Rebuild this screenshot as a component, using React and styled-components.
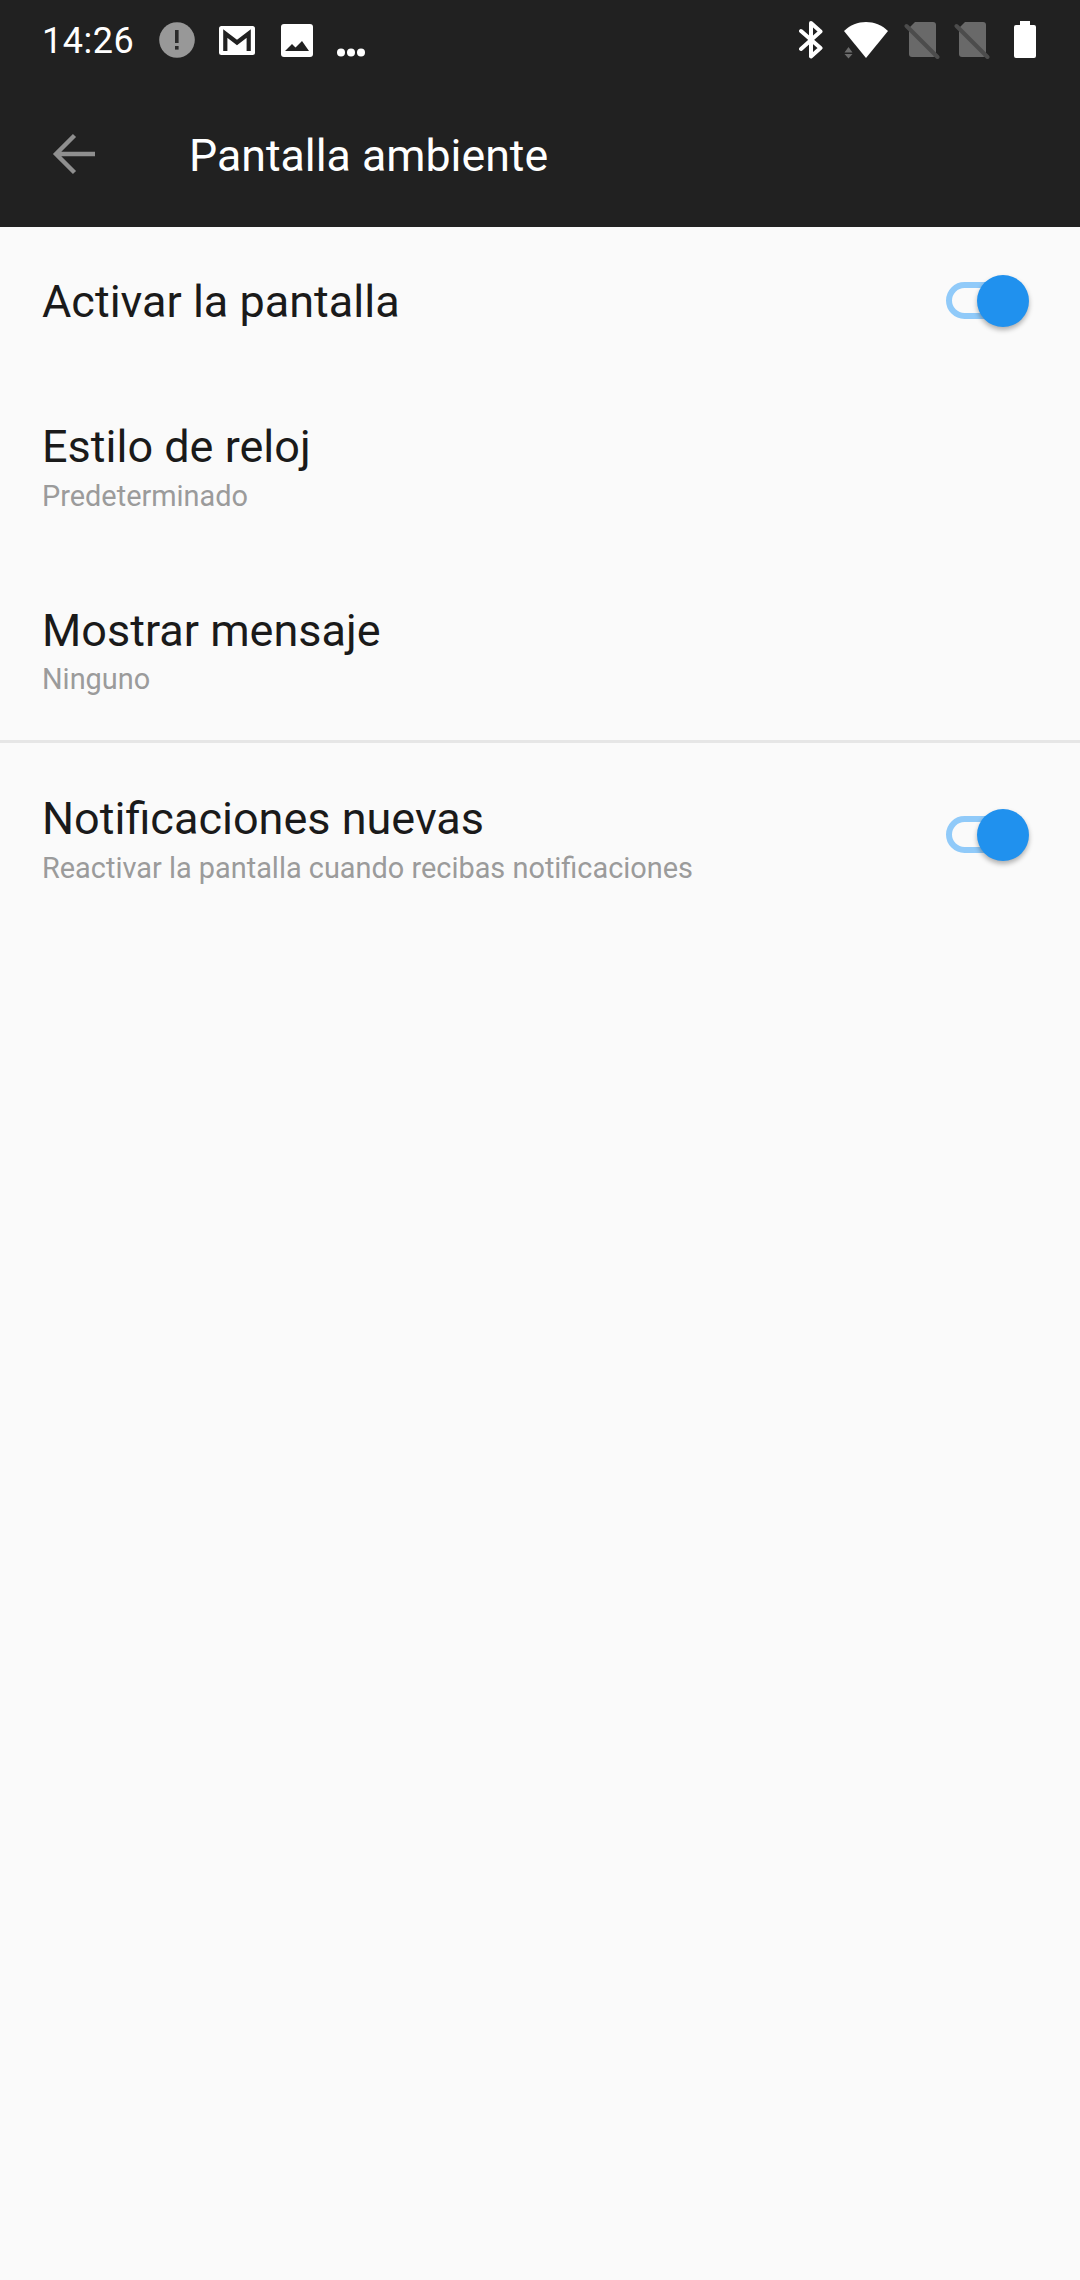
import React from "react";
import styled, { createGlobalStyle } from "styled-components";

const Global = createGlobalStyle`
  html, body { margin: 0; padding: 0; background: #fafafa; }
  body { font-family: Roboto, "Noto Sans", sans-serif; }
`;

const Page = styled.div`
  width: 1080px;
  height: 2280px;
  background: #fafafa;
  overflow: hidden;
`;

const Top = styled.header`
  background: #212121;
  height: 227px;
  display: flex;
  flex-direction: column;
`;

const StatusBar = styled.div`
  height: 80px;
  padding: 0 44px 0 42px;
  display: flex;
  align-items: center;
  justify-content: space-between;
`;

const StatusGroup = styled.div`
  display: flex;
  align-items: center;
`;

const Time = styled.span`
  color: #fff;
  font-size: 36px;
  letter-spacing: 0.5px;
  width: 117px;
  line-height: 80px;
  padding-top: 2px;
`;

const Slot = styled.svg`
  display: block;
  flex: none;
  margin-left: ${(p) => p.$ml || 0}px;
`;

const AppBar = styled.div`
  flex: 1;
  display: flex;
  align-items: center;
  padding-left: 52px;
`;

const BackIcon = styled.svg`
  display: block;
  flex: none;
`;

const Title = styled.h1`
  margin: 4px 0 0 93px;
  color: #fff;
  font-size: 44.7px;
  font-weight: 400;
  line-height: 52px;
`;

const Row = styled.div`
  display: flex;
  align-items: center;
  justify-content: space-between;
  padding: 0 73px 0 42px;
  height: ${(p) => p.$h}px;
  box-sizing: border-box;
`;

const Text = styled.div`
  display: flex;
  flex-direction: column;
  margin-top: ${(p) => p.$shift || 0}px;
`;

const RowTitle = styled.div`
  font-size: 45px;
  line-height: 52px;
  color: #1a1a1a;
`;

const RowSub = styled.div`
  font-size: 28.9px;
  line-height: 36px;
  margin-top: ${(p) => p.$gap ?? 6}px;
  color: #9b9b9b;
`;

const Divider = styled.div`
  height: 3px;
  background: #e6e6e6;
`;

const Track = styled.div`
  position: relative;
  width: 61px;
  height: 37px;
  border: 6px solid #90caf9;
  border-radius: 19px;
  box-sizing: border-box;
`;

const Knob = styled.div`
  position: absolute;
  right: -28px;
  top: -13.5px;
  width: 52px;
  height: 52px;
  border-radius: 50%;
  background: #2091ee;
  box-shadow: 0 3px 5px rgba(0, 0, 0, 0.3);
`;

function Toggle() {
  return (
    <Track>
      <Knob />
    </Track>
  );
}

function SimOff({ ml }) {
  return (
    <Slot $ml={ml} width="36" height="38" viewBox="0 0 36 38">
      <path d="M11 1H29a3 3 0 0 1 3 3V33a3 3 0 0 1-3 3H8a3 3 0 0 1-3-3V7Z" fill="#696969" />
      <path d="M2.5 5L33.5 36" stroke="#4c4c4c" strokeWidth="4" strokeLinecap="round" />
    </Slot>
  );
}

export default function App() {
  return (
    <Page>
      <Global />
      <Top>
        <StatusBar>
          <StatusGroup>
            <Time>14:26</Time>
            <Slot width="36" height="36" viewBox="0 0 36 36">
              <circle cx="18" cy="18" r="17.8" fill="#989898" />
              <rect x="16" y="8" width="3.6" height="13" fill="#2a2a2a" />
              <rect x="16" y="24" width="3.6" height="3.6" fill="#2a2a2a" />
            </Slot>
            <Slot $ml={24} width="36" height="29" viewBox="0 0 36 29">
              <rect width="36" height="29" rx="2.5" fill="#fff" />
              <path d="M6.3 25V7.5L18 16.5L29.7 7.5V25" fill="none" stroke="#212121" strokeWidth="4.2" />
            </Slot>
            <Slot $ml={26} width="32" height="33" viewBox="0 0 32 33">
              <rect width="32" height="33" rx="3" fill="#fff" />
              <path d="M4 27L11 20L14.5 23.5L21 17L28 27Z" fill="#212121" />
            </Slot>
            <Slot $ml={24} width="28" height="36" viewBox="0 0 28 36">
              <circle cx="4" cy="30.5" r="4" fill="#fff" />
              <circle cx="14" cy="30.5" r="4" fill="#fff" />
              <circle cx="24" cy="30.5" r="4" fill="#fff" />
            </Slot>
          </StatusGroup>
          <StatusGroup>
            <Slot width="24" height="38" viewBox="0 0 24 38">
              <path d="M2 10L21.5 27L12 35.5V2L21.5 10.5L2 28" fill="none" stroke="#fff" strokeWidth="4" strokeLinecap="round" strokeLinejoin="round" />
            </Slot>
            <Slot $ml={20} width="46" height="38" viewBox="0 0 46 38">
              <path d="M1 10C13 -2 33 -2 45 10L23 37Z" fill="#fff" />
              <path d="M1.5 31.5L5.5 26L9.5 31.5ZM1.5 33L5.5 37.5L9.5 33Z" fill="#6c6c6c" />
            </Slot>
            <SimOff ml={15} />
            <SimOff ml={14} />
            <Slot $ml={24} width="22" height="38" viewBox="0 0 22 38">
              <path d="M6 0H16V4H20a2 2 0 0 1 2 2V35a2 2 0 0 1-2 2H2a2 2 0 0 1-2-2V6a2 2 0 0 1 2-2H6Z" fill="#fff" />
            </Slot>
          </StatusGroup>
        </StatusBar>
        <AppBar>
          <BackIcon width="44" height="42" viewBox="0 0 44 42">
            <path d="M43 21H4M22.5 2.5L4 21L22.5 39.5" fill="none" stroke="#8f8f8f" strokeWidth="4.4" />
          </BackIcon>
          <Title>Pantalla ambiente</Title>
        </AppBar>
      </Top>
      <Row $h={147}>
        <Text $shift={3}>
          <RowTitle>Activar la pantalla</RowTitle>
        </Text>
        <Toggle />
      </Row>
      <Row $h={183}>
        <Text $shift={4}>
          <RowTitle>Estilo de reloj</RowTitle>
          <RowSub $gap={5}>Predeterminado</RowSub>
        </Text>
      </Row>
      <Row $h={183}>
        <Text $shift={5}>
          <RowTitle>Mostrar mensaje</RowTitle>
          <RowSub $gap={4}>Ninguno</RowSub>
        </Text>
      </Row>
      <Divider />
      <Row $h={183}>
        <Text $shift={9}>
          <RowTitle>Notificaciones nuevas</RowTitle>
          <RowSub $gap={5}>Reactivar la pantalla cuando recibas notificaciones</RowSub>
        </Text>
        <Toggle />
      </Row>
    </Page>
  );
}
